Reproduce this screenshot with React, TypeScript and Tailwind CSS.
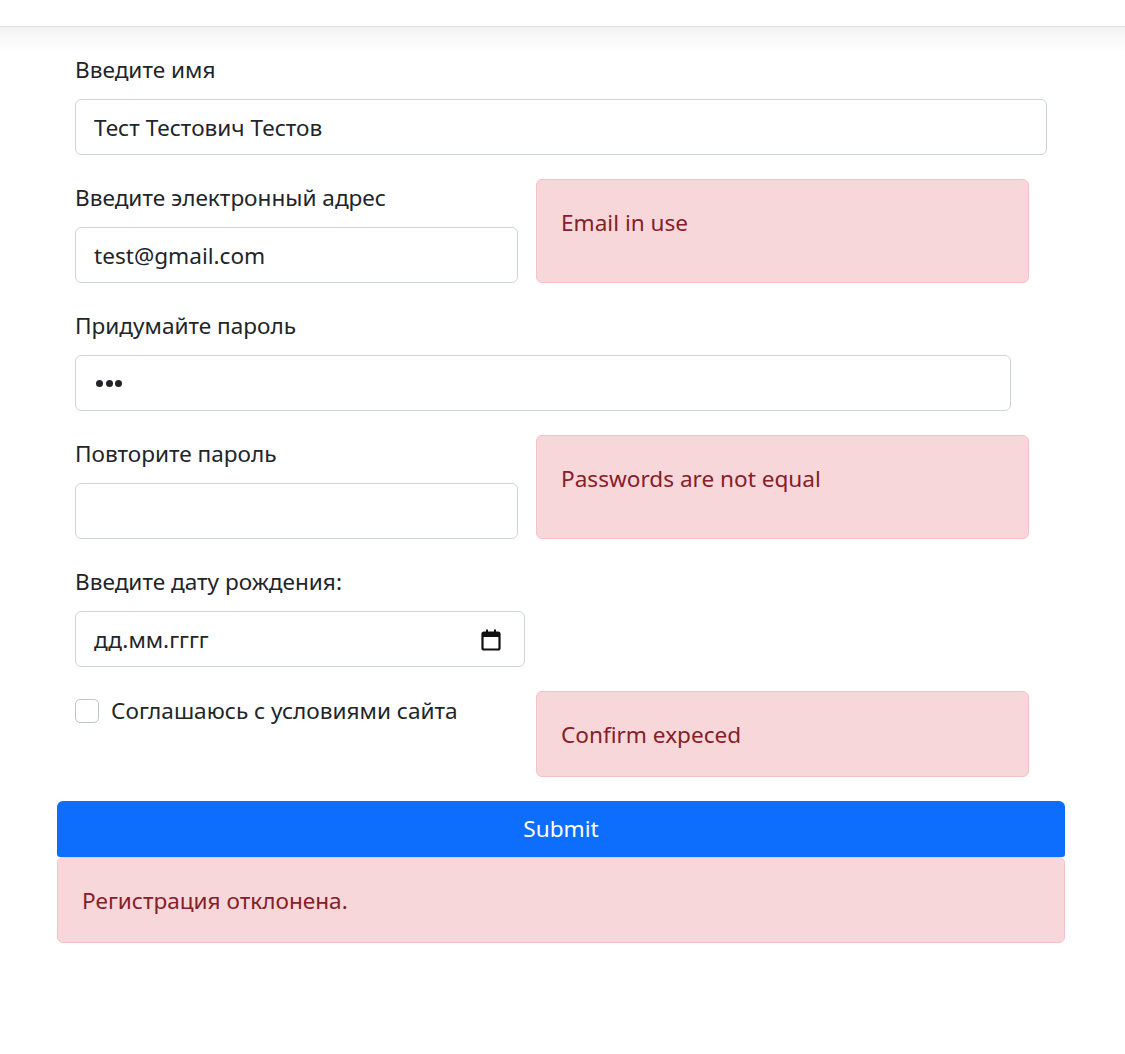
const font = "font-['Noto_Sans','Open_Sans',sans-serif]";

const Label = ({ children }: { children: React.ReactNode }) => (
  <div className="h-[36px] mb-[12px] leading-[37px] text-[#212529]">{children}</div>
);

const Field = ({ value, className, children }: { value?: string; className: string; children?: React.ReactNode }) => (
  <div
    className={`h-[56px] overflow-hidden rounded-[6px] border border-[#ced4da] bg-white px-[18px] leading-[56px] text-[#212529] ${className}`}
  >
    {value}
    {children}
  </div>
);

const Alert = ({ text, className = "" }: { text: string; className?: string }) => (
  <div
    className={`rounded-[6px] border border-[#f5c2c7] bg-[#f8d7da] px-[24px] pt-[25px] leading-[36px] text-[#842029] ${className}`}
  >
    {text}
  </div>
);

const CalendarIcon = () => (
  <svg width="20" height="22" viewBox="0 0 20 22" fill="none">
    <rect x="1.5" y="3.5" width="17" height="17" rx="1.5" stroke="#111" strokeWidth="2.2" />
    <rect x="1.5" y="3.5" width="17" height="4.5" fill="#111" />
    <rect x="5" y="0.5" width="2" height="4" fill="#111" />
    <rect x="13" y="0.5" width="2" height="4" fill="#111" />
  </svg>
);

export default function App() {
  return (
    <div className={`min-h-[1054px] bg-white text-[22.6px] ${font}`}>
      <div className="h-[27px] border-b border-[#dee2e6] bg-white" />
      <div className="h-[24px] bg-gradient-to-b from-[#f3f3f3] to-white" />

      <form className="ml-[57px] w-[1008px]">
        <div className="px-[18px]">
          {/* имя */}
          <Label>Введите имя</Label>
          <Field value="Тест Тестович Тестов" className="w-[972px]" />

          {/* email */}
          <div className="mt-[24px] flex h-[104px] gap-[18px]">
            <div className="w-[443px]">
              <Label>Введите электронный адрес</Label>
              <Field value="test@gmail.com" className="w-[443px]" />
            </div>
            <Alert text="Email in use" className="h-[104px] w-[493px]" />
          </div>

          {/* пароль */}
          <div className="mt-[24px]">
            <Label>Придумайте пароль</Label>
            <Field className="flex w-[936px] items-center pl-[20px]">
              <span className="flex gap-[2.5px]">
                <span className="h-[7px] w-[7px] rounded-full bg-[#212529]" />
                <span className="h-[7px] w-[7px] rounded-full bg-[#212529]" />
                <span className="h-[7px] w-[7px] rounded-full bg-[#212529]" />
              </span>
            </Field>
          </div>

          {/* повтор пароля */}
          <div className="mt-[24px] flex h-[104px] gap-[18px]">
            <div className="w-[443px]">
              <Label>Повторите пароль</Label>
              <Field className="w-[443px]" />
            </div>
            <Alert text="Passwords are not equal" className="h-[104px] w-[493px]" />
          </div>

          {/* дата */}
          <div className="mt-[24px]">
            <Label>Введите дату рождения:</Label>
            <div className="flex h-[56px] w-[450px] items-center justify-between rounded-[6px] border border-[#ced4da] bg-white pl-[18px] pr-[23px] pt-[2px] text-[#212529]">
              <span>дд.мм.гггг</span>
              <CalendarIcon />
            </div>
          </div>

          {/* согласие */}
          <div className="mt-[24px] flex h-[86px] gap-[18px]">
            <label className="flex w-[443px] items-start gap-[12px] text-[#212529]">
              <span className="mt-[8px] h-[24px] w-[24px] shrink-0 rounded-[5px] border border-[#bfc4ca] bg-white" />
              <span className="leading-[40px]">Соглашаюсь с условиями сайта</span>
            </label>
            <Alert text="Confirm expeced" className="h-[86px] w-[493px]" />
          </div>
        </div>

        <button
          type="button"
          className="mt-[24px] block h-[56px] w-[1008px] rounded-t-[6px] rounded-b-[3px] bg-[#0d6efd] text-center text-white"
        >
          Submit
        </button>
        <Alert text="Регистрация отклонена." className="h-[86px] w-[1008px]" />
      </form>
    </div>
  );
}
